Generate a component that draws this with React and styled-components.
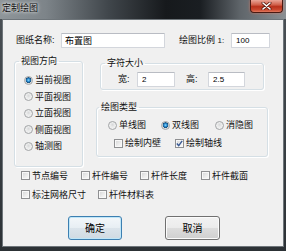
import React from 'react';
import styled, { createGlobalStyle } from 'styled-components';

const FONT = `"Liberation Sans", "Noto Sans CJK SC", sans-serif`;

const GlobalStyle = createGlobalStyle`
	html, body {
		margin: 0;
		padding: 0;
		overflow: hidden;
	}
	body {
		font-family: ${FONT};
		color: #111;
	}
`;

const Window = styled.div`
	width: 286px;
	height: 251px;
	box-sizing: border-box;
	display: flex;
	flex-direction: column;
	background: linear-gradient(180deg, #4b5156 0%, #383e43 60%, #2c3135 100%);
`;

const TitleBar = styled.div`
	height: 19px;
	flex: none;
	display: flex;
	align-items: flex-start;
	padding-left: 2px;
	background: linear-gradient(
		90deg,
		#8f969a 0%,
		#7d8489 16%,
		#40464b 38%,
		#16191c 58%,
		#1a1e22 70%,
		#5f656a 84%,
		#8a9094 100%
	);
`;

const Title = styled.span`
	margin-top: 2px;
	font-size: 9px;
	line-height: 12px;
	color: #101010;
	text-shadow: 0 0 3px rgba(255, 255, 255, 0.9), 0 0 5px rgba(255, 255, 255, 0.6);
`;

const CloseButton = styled.div`
	margin-left: auto;
	margin-right: 3px;
	width: 33px;
	height: 13px;
	box-sizing: border-box;
	display: flex;
	align-items: center;
	justify-content: center;
	border: 1px solid #4a1a12;
	border-top: none;
	border-radius: 0 0 4px 4px;
	background: linear-gradient(180deg, #e9a597 0%, #d0604b 40%, #b8311b 55%, #c9462d 80%, #e07a5f 100%);
	box-shadow: 0 0 3px rgba(255, 120, 90, 0.6);
`;

const Client = styled.div`
	flex: 1;
	margin: 0 2px 4px;
	border: 1px solid #6e757a;
	background: #f0f0f0;
	display: flex;
	flex-direction: column;
	padding-top: 13px;
	font-size: 9px;
`;

const Row = styled.div`
	display: flex;
	align-items: center;
	height: ${({ $h }) => $h || 15}px;
	padding-left: ${({ $pad }) => $pad || 0}px;
`;

const Label = styled.span`
	width: ${({ $w }) => $w}px;
	margin-left: ${({ $ml }) => $ml || 0}px;
	flex: none;
	white-space: nowrap;
	line-height: 15px;

	& small {
		font-size: 8px;
	}
`;

const TextInput = styled.input`
	width: ${({ $w }) => $w}px;
	height: 15px;
	box-sizing: border-box;
	flex: none;
	margin: 0;
	padding: 0 0 0 ${({ $num }) => ($num ? 4 : 3)}px;
	border: 1px solid #d3d6dc;
	border-top-color: #b9bcc3;
	border-radius: 1px;
	background: #fff;
	font-family: ${FONT};
	font-size: ${({ $num }) => ($num ? 8 : 9)}px;
	color: #000;
	outline: none;
`;

const Middle = styled.div`
	display: flex;
	align-items: flex-start;
	margin-top: 7px;
	padding-left: 11px;
`;

const Group = styled.fieldset`
	margin: 0 ${({ $inset }) => $inset || 0}px;
	padding: 0 0 ${({ $pb }) => $pb || 0}px;
	border: 1px solid #d5dfe5;
	border-radius: 3px;
	box-shadow: inset 1px 1px 0 #fff, 1px 1px 0 #fff;
	min-width: 0;
`;

const Legend = styled.legend`
	margin-left: ${({ $ml }) => $ml ?? 4}px;
	padding: 0 2px;
	font-size: 9px;
	line-height: 12px;
`;

const GroupBody = styled.div`
	display: flex;
	flex-direction: ${({ $col }) => ($col ? 'column' : 'row')};
	padding: ${({ $pt }) => $pt || 0}px 0 0 ${({ $pl }) => $pl || 0}px;
	align-items: ${({ $col }) => ($col ? 'stretch' : 'center')};
`;

const LeftGroup = styled(Group)`
	width: 69px;
	box-sizing: border-box;
	flex: none;
`;

const RightColumn = styled.div`
	display: flex;
	flex-direction: column;
	width: 172px;
	margin-left: 13px;
	margin-top: 2px;
	gap: 11px;
`;

const Option = styled.label`
	display: flex;
	align-items: center;
	gap: 2px;
	height: ${({ $h }) => $h || 16}px;
	width: ${({ $w }) => ($w ? `${$w}px` : 'auto')};
	flex: none;
	white-space: nowrap;
	line-height: 12px;
`;

const RadioDot = styled.span`
	width: 9px;
	height: 9px;
	box-sizing: border-box;
	flex: none;
	border-radius: 50%;
	border: 1px solid #a2a4a6;
	background: ${({ $checked }) =>
		$checked
			? 'radial-gradient(circle at 50% 45%, #8fdcff 0, #2b8fd4 1.4px, #17507f 2.6px, #d9dadb 3.1px, #f6f6f6 100%)'
			: 'radial-gradient(circle at 50% 40%, #d6d7d8 0, #e9eaea 2px, #f7f7f7 100%)'};
`;

const CheckBox = styled.span`
	width: 9px;
	height: 9px;
	box-sizing: border-box;
	flex: none;
	display: flex;
	align-items: center;
	justify-content: center;
	border: 1px solid #8f9092;
	background: linear-gradient(135deg, #d3d4d5 0%, #eeeeee 60%, #fbfbfb 100%);
	box-shadow: inset 0 0 0 1px #f8f8f8;
`;

const Rows = styled.div`
	display: flex;
	flex-direction: column;
	gap: 3px;
	margin-top: 1px;
	padding-left: 18px;
`;

const CheckRow = styled.div`
	display: flex;
	align-items: center;
	padding-left: ${({ $pad }) => $pad || 0}px;
`;

const ButtonRow = styled.div`
	display: flex;
	gap: 43px;
	margin-top: 13px;
	padding-left: 65px;
`;

const Button = styled.button`
	width: ${({ $w }) => $w}px;
	height: 24px;
	box-sizing: border-box;
	margin: 0;
	padding: 0;
	border: 1px solid ${({ $primary }) => ($primary ? '#3c7fb1' : '#707070')};
	border-radius: 3px;
	background: ${({ $primary }) =>
		$primary
			? 'linear-gradient(180deg, #f3f7fa 0%, #e7eef3 50%, #dbe4eb 50%, #d0dae2 100%)'
			: 'linear-gradient(180deg, #f2f2f2 0%, #ebebeb 50%, #dddddd 50%, #cfcfcf 100%)'};
	box-shadow: inset 0 0 0 1px ${({ $primary }) => ($primary ? '#bfe6f8' : '#fbfbfb')};
	font-family: ${FONT};
	font-size: 10px;
	color: #000;
`;

function Radio({ checked, children, w, h }) {
	return (
		<Option $w={w} $h={h}>
			<RadioDot $checked={checked} />
			{children}
		</Option>
	);
}

function Check({ checked, children, w, h }) {
	return (
		<Option $w={w} $h={h}>
			<CheckBox>
				{checked && (
					<svg width="7" height="7" viewBox="0 0 7 7">
						<path d="M0.8 3.6 L2.7 5.6 L6.2 0.9" fill="none" stroke="#3a5a94" strokeWidth="1.4" />
					</svg>
				)}
			</CheckBox>
			{children}
		</Option>
	);
}

const views = ['当前视图', '平面视图', '立面视图', '侧面视图', '轴测图'];

export default function App() {
	return (
		<Window>
			<GlobalStyle />
			<TitleBar>
				<Title>定制绘图</Title>
				<CloseButton>
					<svg width="11" height="8" viewBox="0 0 11 8">
						<path d="M2 1 L9 7 M9 1 L2 7" stroke="#5a1a10" strokeWidth="3" strokeLinecap="round" />
						<path d="M2 1 L9 7 M9 1 L2 7" stroke="#fff" strokeWidth="1.6" strokeLinecap="round" />
					</svg>
				</CloseButton>
			</TitleBar>
			<Client>
				<Row $pad={13}>
					<Label $w={45}>图纸名称:</Label>
					<TextInput $w={104} defaultValue="布置图" />
					<Label $w={52} $ml={14}>
						绘图比例 <small>1:</small>
					</Label>
					<TextInput $w={39} $num defaultValue="100" />
				</Row>

				<Middle>
					<LeftGroup $pb={11}>
						<Legend>视图方向</Legend>
						<GroupBody $col $pt={5} $pl={9}>
							{views.map((v, i) => (
								<Radio key={v} checked={i === 0} h={16.5}>
									{v}
								</Radio>
							))}
						</GroupBody>
					</LeftGroup>

					<RightColumn>
						<Group $inset={4} $pb={2}>
							<Legend>字符大小</Legend>
							<GroupBody $pt={3} $pl={17}>
								<Label $w={19}>宽:</Label>
								<TextInput $w={38} $num defaultValue="2" />
								<Label $w={22} $ml={11}>
									高:
								</Label>
								<TextInput $w={37} $num defaultValue="2.5" />
							</GroupBody>
						</Group>

						<Group $pb={4}>
							<Legend $ml={2}>绘图类型</Legend>
							<GroupBody $col $pt={3} $pl={11}>
								<CheckRow>
									<Radio w={53} h={18}>单线图</Radio>
									<Radio w={54} h={18} checked>
										双线图
									</Radio>
									<Radio h={18}>消隐图</Radio>
								</CheckRow>
								<CheckRow $pad={6}>
									<Check w={61} h={18}>绘制内壁</Check>
									<Check h={18} checked>
										绘制轴线
									</Check>
								</CheckRow>
							</GroupBody>
						</Group>
					</RightColumn>
				</Middle>

				<Rows>
					<CheckRow>
						<Check w={60}>节点编号</Check>
						<Check w={59}>杆件编号</Check>
						<Check w={61}>杆件长度</Check>
						<Check>杆件截面</Check>
					</CheckRow>
					<CheckRow>
						<Check w={77}>标注网格尺寸</Check>
						<Check>杆件材料表</Check>
					</CheckRow>
				</Rows>

				<ButtonRow>
					<Button $w={54} $primary>
						确定
					</Button>
					<Button $w={55}>取消</Button>
				</ButtonRow>
			</Client>
		</Window>
	);
}
